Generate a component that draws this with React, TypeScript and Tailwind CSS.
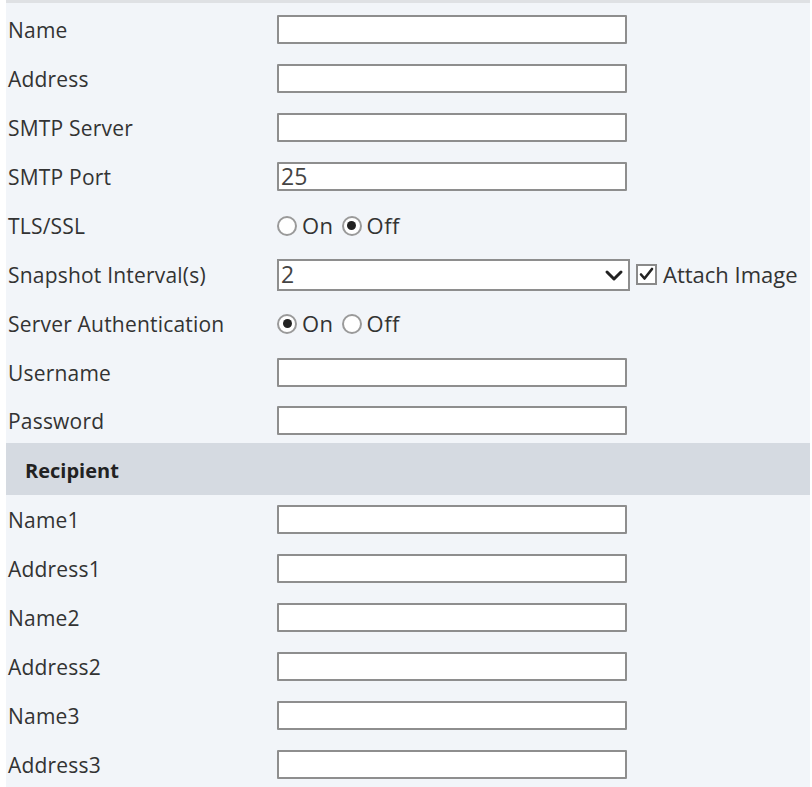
import React from 'react';

const font = { fontFamily: '"Open Sans", "Noto Sans", sans-serif' };

function TextRow({ label, value = '', last = false }: { label: string; value?: string; last?: boolean }) {
    return (
        <div className={`flex items-center ${last ? 'h-[46px]' : 'h-[49px]'}`}>
            <div className="w-[271px] pl-[2px] pt-[3px] text-[21px] tracking-[0.2px] text-[#333]">{label}</div>
            <div className="w-[350px] h-[29px] bg-white border-2 border-[#8e8e8e] rounded-[1px] flex items-center px-[2px] text-[23px] leading-none text-[#444]">
                {value}
            </div>
        </div>
    );
}

function Radio({ checked }: { checked: boolean }) {
    return (
        <span className="w-[20px] h-[20px] rounded-full border-2 border-[#9a9a9a] bg-white flex items-center justify-center">
            {checked && <span className="w-[9px] h-[9px] rounded-full bg-[#222]" />}
        </span>
    );
}

function RadioRow({ label, on }: { label: string; on: boolean }) {
    return (
        <div className="flex items-center h-[49px]">
            <div className="w-[271px] pl-[2px] pt-[3px] text-[21px] tracking-[0.2px] text-[#333]">{label}</div>
            <div className="flex items-center gap-[5px] text-[22px] tracking-[0.5px] text-[#333]">
                <Radio checked={on} />
                <span className="mr-[3px]">On</span>
                <Radio checked={!on} />
                <span>Off</span>
            </div>
        </div>
    );
}

export default function App() {
    return (
        <div className="w-[812px] h-[787px] bg-white pl-[6px] pr-[2px]" style={font}>
            <div className="h-full bg-[#f2f5f9] border-t-[3px] border-[#dfe1e4] pt-[2px]">
                <TextRow label="Name" />
                <TextRow label="Address" />
                <TextRow label="SMTP Server" />
                <TextRow label="SMTP Port" value="25" />
                <RadioRow label="TLS/SSL" on={false} />

                {/* snapshot interval + attach image */}
                <div className="flex items-center h-[49px]">
                    <div className="w-[271px] pl-[2px] pt-[3px] text-[21px] tracking-[0.2px] text-[#333]">Snapshot Interval(s)</div>
                    <div className="w-[353px] h-[32px] bg-white border-2 border-[#8e8e8e] flex items-center justify-between pl-[2px] pr-[4px] text-[23px] leading-none text-[#444]">
                        <span>2</span>
                        <svg width="20" height="14" viewBox="0 0 20 14" fill="none" stroke="#222" strokeWidth="3" strokeLinecap="round" strokeLinejoin="round">
                            <path d="M3 4l7 7 7-7" />
                        </svg>
                    </div>
                    <span className="ml-[6px] w-[21px] h-[21px] border-2 border-[#8a8a8a] bg-white flex items-center justify-center">
                        <svg width="17" height="17" viewBox="0 0 17 17" fill="none" stroke="#222" strokeWidth="2.6" strokeLinecap="round" strokeLinejoin="round">
                            <path d="M3 8.5l3.5 4L14 3" />
                        </svg>
                    </span>
                    <span className="ml-[6px] text-[22px] text-[#333]">Attach Image</span>
                </div>

                <RadioRow label="Server Authentication" on={true} />
                <TextRow label="Username" />
                <TextRow label="Password" last />

                <div className="h-[52px] bg-[#d5dae1] flex items-center pl-[19px] pt-[3px] text-[20px] font-bold text-[#222]">
                    Recipient
                </div>

                <TextRow label="Name1" />
                <TextRow label="Address1" />
                <TextRow label="Name2" />
                <TextRow label="Address2" />
                <TextRow label="Name3" />
                <TextRow label="Address3" />
            </div>
        </div>
    );
}
